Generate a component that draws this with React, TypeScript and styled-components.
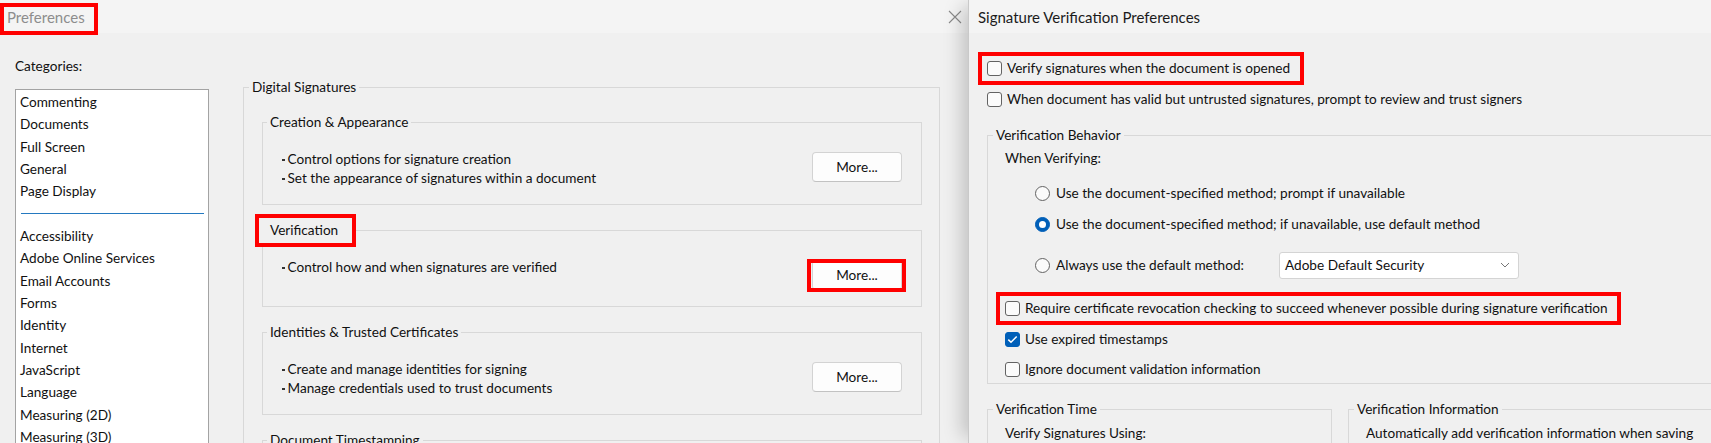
import React from 'react'
import styled, { createGlobalStyle } from 'styled-components'

const GlobalStyle = createGlobalStyle`
  html, body { margin: 0; padding: 0; }
  body {
    width: 1711px;
    height: 443px;
    overflow: hidden;
    background: #f0f0f0;
    font-family: Lato, 'Noto Sans', sans-serif;
    font-size: 13.6px;
    color: #111111;
  }
  * { box-sizing: border-box; }
`

const Screen = styled.div`
  display: flex;
  width: 1711px;
  height: 443px;
  overflow: hidden;
`

/* ---------- shared window chrome ---------- */

const TitleBar = styled.div`
  height: 33px;
  flex: none;
  display: flex;
  align-items: center;
  justify-content: space-between;
  padding: 0 6px 0 7px;
  background: #f4f4f4;
`

const Title = styled.span<{ $muted?: boolean }>`
  font-size: 15px;
  line-height: 20px;
  color: ${(p) => (p.$muted ? '#8d8d8d' : '#1b1b1b')};
`

const CloseIcon = () => (
  <svg width="14" height="14" viewBox="0 0 14 14">
    <path d="M1 1L13 13M13 1L1 13" stroke="#8a8a8a" strokeWidth="1.1" fill="none" />
  </svg>
)

// red annotation rectangles drawn over the screenshot
const Highlight = styled.span<{ $pad?: string; $ring?: string; $fill?: boolean }>`
  position: relative;
  display: inline-flex;
  align-items: center;
  padding: ${(p) => p.$pad || '0'};
  margin: ${(p) =>
    (p.$pad || '0')
      .split(' ')
      .map((v) => (v === '0' ? '0' : `-${v}`))
      .join(' ')};
  background: ${(p) => (p.$fill ? '#f0f0f0' : 'transparent')};
  &::after {
    content: '';
    position: absolute;
    inset: ${(p) => p.$ring || '-4px'};
    border: 4px solid #ff0000;
    pointer-events: none;
  }
`

const Group = styled.fieldset<{ $width?: number; $grow?: boolean; $top?: number }>`
  margin: ${(p) => p.$top || 0}px 0 0;
  padding: 0;
  min-width: 0;
  border: 1px solid #d8d8d8;
  ${(p) => (p.$width ? `width: ${p.$width}px; flex: none;` : '')}
  ${(p) => (p.$grow ? 'flex: 1;' : '')}
`

const Legend = styled.legend<{ $offset: number }>`
  margin-left: ${(p) => p.$offset}px;
  padding: 0 3px;
  line-height: 18px;
`

/* ---------- Preferences window ---------- */

const PrefsWindow = styled.div`
  width: 968px;
  flex: none;
  display: flex;
  flex-direction: column;
  background: #f0f0f0;
`

const PrefsBody = styled.div`
  display: flex;
  gap: 34px;
  padding: 24px 0 0 15px;
`

const Sidebar = styled.div`
  width: 194px;
  flex: none;
`

const SideLabel = styled.div`
  line-height: 18px;
  margin-bottom: 14px;
`

const CategoryList = styled.div`
  height: 400px;
  padding-top: 1px;
  background: #ffffff;
  border: 1px solid #a3a3a3;
`

const CategoryItem = styled.div`
  height: 22.33px;
  line-height: 22.33px;
  padding-left: 4px;
  white-space: nowrap;
`

const CategorySeparator = styled.div`
  height: 22.33px;
  display: flex;
  align-items: center;
  padding: 0 4px 0 5px;
  &::after {
    content: '';
    flex: 1;
    height: 1px;
    background: #2479c0;
  }
`

const Main = styled.div`
  width: 697px;
  flex: none;
  margin-top: 21px;
`

const SectionStack = styled.div`
  display: flex;
  flex-direction: column;
  gap: 16px;
  padding: 17px 17px 0 18px;
`

const SectionBody = styled.div`
  display: flex;
  align-items: flex-start;
  padding: 19px 19px 16px 19px;
`

const Bullets = styled.ul`
  flex: 1;
  margin: 0;
  padding: 0;
  list-style: none;
  line-height: 19px;
`

const Bullet = styled.li`
  display: flex;
  align-items: center;
  &::before {
    content: '';
    width: 2.5px;
    height: 2.5px;
    margin-right: 3px;
    margin-top: 1px;
    background: #333;
  }
`

const MoreButton = styled.button`
  width: 90px;
  height: 30px;
  padding: 0;
  background: #fdfdfd;
  border: 1px solid #d3d3d3;
  border-bottom-color: #c2c2c2;
  border-radius: 4px;
  font-family: inherit;
  font-size: 13.6px;
  color: #111111;
`

const ButtonSlot = styled.div`
  margin-top: 2px;
  display: flex;
`

/* ---------- Signature Verification dialog ---------- */

const Dialog = styled.div`
  flex: 1;
  display: flex;
  flex-direction: column;
  background: #f0f0f0;
  border-left: 1px solid #c9c9c9;
  box-shadow: -12px 0 18px -6px rgba(0, 0, 0, 0.2);
  position: relative;
`

const DialogTitleBar = styled(TitleBar)`
  padding-left: 9px;
`

// the dialog runs on past the right edge of the capture
const DialogBody = styled.div`
  padding: 25.5px 0 0 18px;
  margin-right: -14px;
`

const Row = styled.div<{ $gap?: number }>`
  display: flex;
  align-items: center;
  margin-top: ${(p) => p.$gap || 0}px;
`

const Option = styled.label<{ $width?: number }>`
  display: inline-flex;
  align-items: center;
  height: 19px;
  line-height: 19px;
  white-space: nowrap;
  ${(p) => (p.$width ? `width: ${p.$width}px; flex: none;` : '')}
`

const Box = styled.span<{ $checked?: boolean }>`
  width: 15px;
  height: 15px;
  flex: none;
  margin-right: 5px;
  border-radius: 3px;
  display: inline-flex;
  align-items: center;
  justify-content: center;
  border: 1px solid ${(p) => (p.$checked ? '#005fb8' : '#636363')};
  background: ${(p) => (p.$checked ? '#005fb8' : '#fbfbfb')};
`

const Radio = styled.span<{ $checked?: boolean }>`
  width: 15px;
  height: 15px;
  flex: none;
  margin-right: 6px;
  border-radius: 50%;
  display: inline-flex;
  align-items: center;
  justify-content: center;
  border: 1px solid ${(p) => (p.$checked ? '#005fb8' : '#636363')};
  background: ${(p) => (p.$checked ? '#005fb8' : '#fbfbfb')};
  &::after {
    content: '';
    display: ${(p) => (p.$checked ? 'block' : 'none')};
    width: 7px;
    height: 7px;
    border-radius: 50%;
    background: #ffffff;
  }
`

const GroupBody = styled.div<{ $pad: string }>`
  padding: ${(p) => p.$pad};
`

const Line = styled.div`
  line-height: 19px;
  white-space: nowrap;
`

const RadioList = styled.div`
  padding-left: 30px;
  margin-top: 16px;
`

const Select = styled.div`
  width: 240px;
  height: 27px;
  flex: none;
  display: flex;
  align-items: center;
  justify-content: space-between;
  padding: 0 8px 0 5px;
  background: #ffffff;
  border: 1px solid #d4d4d4;
  border-radius: 3px;
`

const BottomGroups = styled.div`
  display: flex;
  gap: 16px;
  margin-top: 16px;
`

const CheckMark = () => (
  <svg width="11" height="9" viewBox="0 0 11 9">
    <path d="M1.3 4.6L4 7.3L9.7 1.5" stroke="#ffffff" strokeWidth="1.5" fill="none" />
  </svg>
)

const Chevron = () => (
  <svg width="10" height="6" viewBox="0 0 10 6">
    <path d="M1 1L5 5L9 1" stroke="#767676" strokeWidth="1" fill="none" />
  </svg>
)

const Check = ({ label, checked }: { label: string; checked?: boolean }) => (
  <Option>
    <Box $checked={checked}>{checked && <CheckMark />}</Box>
    {label}
  </Option>
)

const categoriesTop = ['Commenting', 'Documents', 'Full Screen', 'General', 'Page Display']
const categoriesRest = [
  'Accessibility',
  'Adobe Online Services',
  'Email Accounts',
  'Forms',
  'Identity',
  'Internet',
  'JavaScript',
  'Language',
  'Measuring (2D)',
  'Measuring (3D)',
]

function App() {
  return (
    <>
      <GlobalStyle />
      <Screen>
        <PrefsWindow>
          <TitleBar>
            <Highlight $pad="0 9px 4px 3px">
              <Title $muted>Preferences</Title>
            </Highlight>
            <CloseIcon />
          </TitleBar>
          <PrefsBody>
            <Sidebar>
              <SideLabel>Categories:</SideLabel>
              <CategoryList>
                {categoriesTop.map((c) => (
                  <CategoryItem key={c}>{c}</CategoryItem>
                ))}
                <CategorySeparator />
                {categoriesRest.map((c) => (
                  <CategoryItem key={c}>{c}</CategoryItem>
                ))}
              </CategoryList>
            </Sidebar>
            <Main>
              <Group>
                <Legend $offset={5}>Digital Signatures</Legend>
                <SectionStack>
                  <Group>
                    <Legend $offset={4}>Creation &amp; Appearance</Legend>
                    <SectionBody>
                      <Bullets>
                        <Bullet>Control options for signature creation</Bullet>
                        <Bullet>Set the appearance of signatures within a document</Bullet>
                      </Bullets>
                      <ButtonSlot>
                        <MoreButton>More...</MoreButton>
                      </ButtonSlot>
                    </SectionBody>
                  </Group>
                  <Group>
                    <Legend $offset={4}>
                      <Highlight $pad="3px 14px 4px 11px" $fill>
                        Verification
                      </Highlight>
                    </Legend>
                    <SectionBody>
                      <Bullets>
                        <Bullet>Control how and when signatures are verified</Bullet>
                      </Bullets>
                      <ButtonSlot>
                        <Highlight $ring="-1px -4px -2px -5px">
                          <MoreButton>More...</MoreButton>
                        </Highlight>
                      </ButtonSlot>
                    </SectionBody>
                  </Group>
                  <Group>
                    <Legend $offset={4}>Identities &amp; Trusted Certificates</Legend>
                    <SectionBody>
                      <Bullets>
                        <Bullet>Create and manage identities for signing</Bullet>
                        <Bullet>Manage credentials used to trust documents</Bullet>
                      </Bullets>
                      <ButtonSlot>
                        <MoreButton>More...</MoreButton>
                      </ButtonSlot>
                    </SectionBody>
                  </Group>
                  <Group>
                    <Legend $offset={4}>Document Timestamping</Legend>
                    <SectionBody />
                  </Group>
                </SectionStack>
              </Group>
            </Main>
          </PrefsBody>
        </PrefsWindow>

        <Dialog>
          <DialogTitleBar>
            <Title>Signature Verification Preferences</Title>
          </DialogTitleBar>
          <DialogBody>
            <Row>
              <Highlight $pad="2.5px 10px 3.5px 5px">
                <Check label="Verify signatures when the document is opened" />
              </Highlight>
            </Row>
            <Row $gap={12}>
              <Check label="When document has valid but untrusted signatures, prompt to review and trust signers" />
            </Row>

            <Group $top={17.5}>
              <Legend $offset={5}>Verification Behavior</Legend>
              <GroupBody $pad="4.5px 0 4px 17px">
                <Line>When Verifying:</Line>
                <RadioList>
                  <Row>
                    <Option>
                      <Radio />
                      Use the document-specified method; prompt if unavailable
                    </Option>
                  </Row>
                  <Row $gap={12}>
                    <Option>
                      <Radio $checked />
                      Use the document-specified method; if unavailable, use default method
                    </Option>
                  </Row>
                  <Row $gap={18}>
                    <Option $width={244}>
                      <Radio />
                      Always use the default method:
                    </Option>
                    <Select>
                      <span>Adobe Default Security</span>
                      <Chevron />
                    </Select>
                  </Row>
                </RadioList>
                <Row $gap={20.5}>
                  <Highlight $pad="3.5px 9px 2.5px 5px">
                    <Check label="Require certificate revocation checking to succeed whenever possible during signature verification" />
                  </Highlight>
                </Row>
                <Row $gap={11.5}>
                  <Check label="Use expired timestamps" checked />
                </Row>
                <Row $gap={11.5}>
                  <Check label="Ignore document validation information" />
                </Row>
              </GroupBody>
            </Group>

            <BottomGroups>
              <Group $width={345}>
                <Legend $offset={5}>Verification Time</Legend>
                <GroupBody $pad="5.5px 0 40px 17px">
                  <Line>Verify Signatures Using:</Line>
                </GroupBody>
              </Group>
              <Group $grow>
                <Legend $offset={5}>Verification Information</Legend>
                <GroupBody $pad="5.5px 0 40px 17px">
                  <Line>Automatically add verification information when saving</Line>
                </GroupBody>
              </Group>
            </BottomGroups>
          </DialogBody>
        </Dialog>
      </Screen>
    </>
  )
}

export default App
